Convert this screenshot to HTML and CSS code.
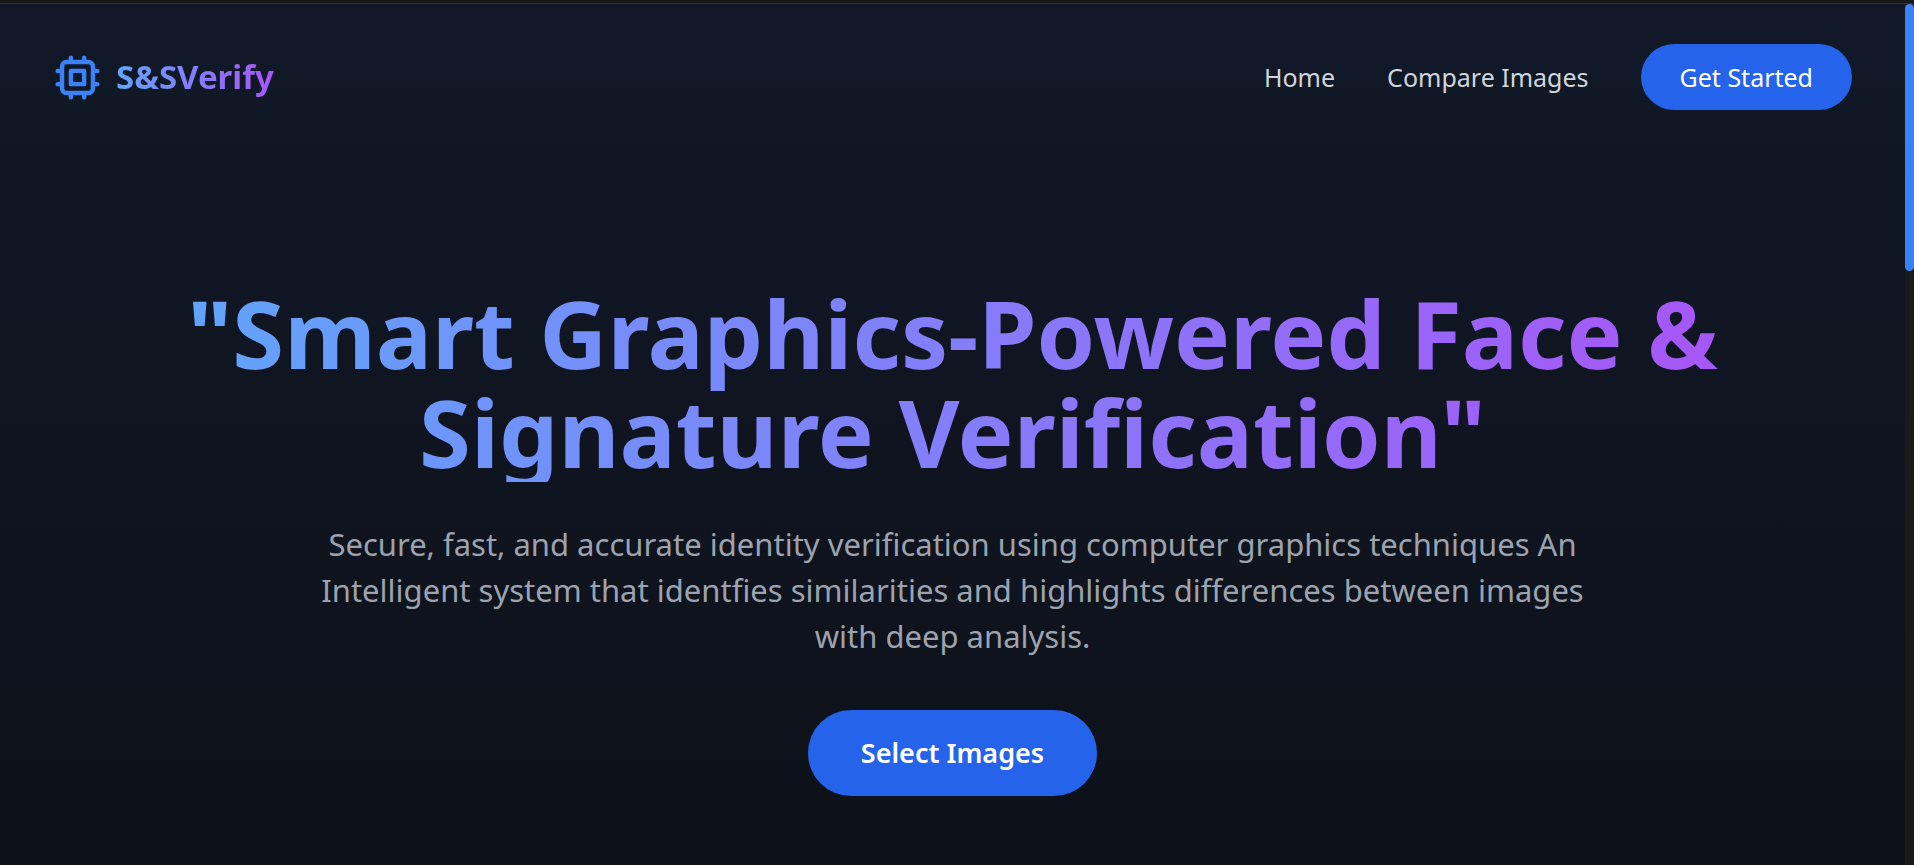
FILE: index.html
```html
<!DOCTYPE html>
<html lang="en">
<head>
<meta charset="utf-8">
<title>S&amp;SVerify</title>
<link rel="stylesheet" href="styles.css">
</head>
<body>
<div class="window-edge"></div>
<div class="viewport">
  <div class="page">
    <header class="navbar">
      <a class="brand" href="#">
        <svg class="brand-icon" viewBox="0 0 24 24" fill="none" stroke="currentColor" stroke-width="2" stroke-linecap="round" stroke-linejoin="round" aria-hidden="true">
          <path d="M9 3v2m6-2v2M9 19v2m6-2v2M5 9H3m2 6H3m18-6h-2m2 6h-2M7 19h10a2 2 0 002-2V7a2 2 0 00-2-2H7a2 2 0 00-2 2v10a2 2 0 002 2zM9 9h6v6H9V9z"/>
        </svg>
        <span class="brand-name">S&amp;SVerify</span>
      </a>
      <nav class="nav-links">
        <a class="nav-link" href="#">Home</a>
        <a class="nav-link" href="#">Compare Images</a>
        <button class="btn btn-nav" type="button">Get Started</button>
      </nav>
    </header>
    <main class="hero">
      <h1 class="hero-title">"Smart Graphics-Powered Face &amp; Signature Verification"</h1>
      <p class="hero-text">Secure, fast, and accurate identity verification using computer graphics techniques An Intelligent system that identfies similarities and highlights differences between images with deep analysis.</p>
      <button class="btn btn-hero" type="button">Select Images</button>
    </main>
  </div>
  <div class="scrollbar"><div class="scrollbar-thumb"></div></div>
</div>
</body>
</html>
```
FILE: styles.css
```css
* { box-sizing: border-box; }

body {
  margin: 0;
  min-height: 100vh;
  display: flex;
  flex-direction: column;
  background: #0d111a;
  color: #fff;
  font-family: "Noto Sans", "Open Sans", sans-serif;
}

.window-edge {
  height: 4px;
  background: #181818;
  border-bottom: 1px solid #332f2f;
}

.viewport {
  flex: 1;
  display: flex;
}

.page {
  flex: 1;
  background: linear-gradient(to bottom, #111827, #0d1119);
}

.navbar {
  display: flex;
  align-items: center;
  justify-content: space-between;
  padding: 40px 53px 40px 51px;
}

.brand {
  display: flex;
  align-items: center;
  gap: 12px;
  text-decoration: none;
}

.brand-icon {
  width: 53px;
  height: 53px;
  color: #3b82f6;
}

.brand-name,
.hero-title {
  background: linear-gradient(to right, #60a5fa, #a855f7);
  -webkit-background-clip: text;
  background-clip: text;
  color: transparent;
  font-weight: 700;
}

.brand-name {
  font-size: 33px;
  line-height: 46px;
}

.nav-links {
  display: flex;
  align-items: center;
  gap: 52px;
}

.nav-link {
  color: #d1d5db;
  font-size: 25px;
  line-height: 36px;
  text-decoration: none;
}

.btn {
  border: 0;
  border-radius: 999px;
  background: #2563eb;
  color: #fff;
  font-family: inherit;
  cursor: pointer;
}

.btn-nav {
  padding: 15px 39px;
  font-size: 25px;
  line-height: 36px;
}

.hero {
  display: flex;
  flex-direction: column;
  align-items: center;
  padding: 131px 40px 69px;
  text-align: center;
}

.hero-title {
  max-width: 1590px;
  margin: 0;
  padding-top: 3px;
  font-size: 94px;
  line-height: 99px;
}

.hero-text {
  max-width: 1270px;
  margin: 39px 0 51px;
  color: #9ca3af;
  font-size: 31px;
  line-height: 46px;
}

.btn-hero {
  padding: 20px 53px;
  font-size: 27px;
  line-height: 46px;
  font-weight: 600;
}

.scrollbar {
  width: 9px;
  background: #1a1a1a;
}

.scrollbar-thumb {
  height: 267px;
  border-radius: 6px;
  background: #3b82f6;
}
```
